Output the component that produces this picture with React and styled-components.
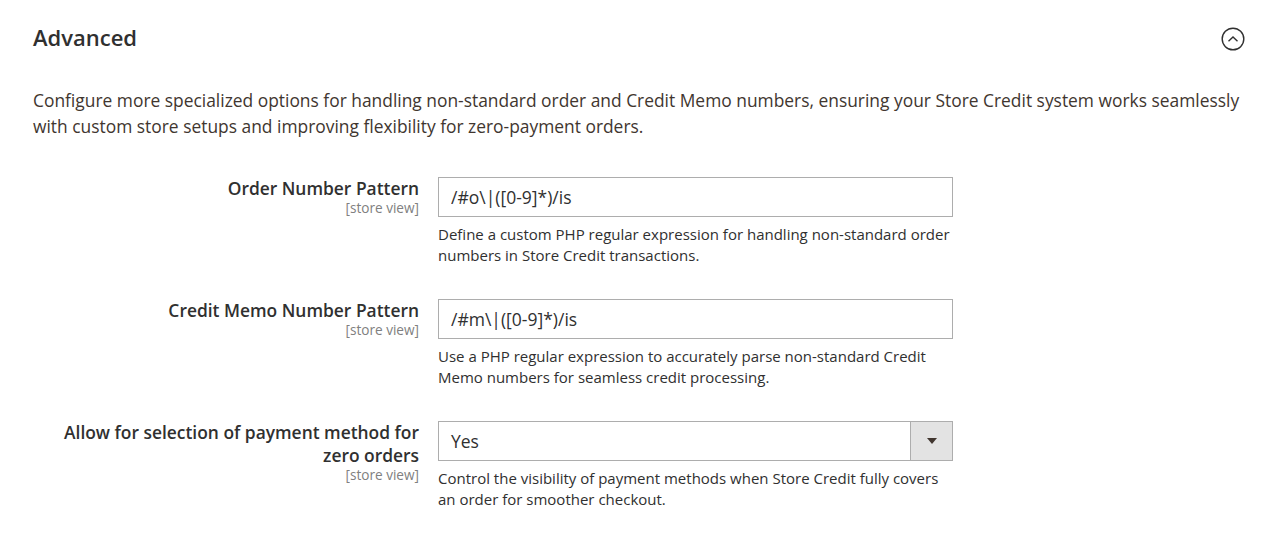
import React from 'react';
import styled, { createGlobalStyle } from 'styled-components';

const GlobalStyle = createGlobalStyle`
  body {
    margin: 0;
    background: #fff;
    font-family: 'Open Sans', 'Liberation Sans', sans-serif;
    color: #41362f;
  }
`;

const Section = styled.section`
  padding: 22px 20px 20px 33px;
`;

const Header = styled.div`
  display: flex;
  justify-content: space-between;
  align-items: center;
  height: 30px;
`;

const Title = styled.h2`
  margin: 0;
  font-size: 22px;
  font-weight: 600;
  color: #303030;
`;

const Toggle = styled.button`
  border: none;
  background: none;
  padding: 0;
  width: 24px;
  height: 24px;
  margin-right: 8px;
  margin-top: 3px;
  cursor: pointer;
  display: flex;
`;

const Intro = styled.p`
  margin: 35px 0 38px;
  font-size: 17.4px;
  line-height: 26px;
  color: #41362f;
`;

const Rows = styled.div`
  display: flex;
  flex-direction: column;
  gap: 33px;
`;

const Row = styled.div`
  display: grid;
  grid-template-columns: 386px 515px;
  column-gap: 19px;
`;

const LabelCol = styled.div`
  text-align: right;
`;

const Label = styled.div`
  font-size: 17.4px;
  font-weight: 600;
  line-height: 23px;
  color: #303030;
`;

const Scope = styled.div`
  font-size: 13.6px;
  line-height: 16px;
  color: #808080;
`;

const Input = styled.input`
  box-sizing: border-box;
  width: 100%;
  height: 40px;
  border: 1px solid #adadad;
  padding: 0 12px;
  font-family: inherit;
  font-size: 17.5px;
  color: #303030;
  outline: none;
  border-radius: 0;
`;

const SelectBox = styled.div`
  box-sizing: border-box;
  height: 40px;
  border: 1px solid #adadad;
  display: flex;
  align-items: stretch;
`;

const SelectValue = styled.div`
  flex: 1;
  display: flex;
  align-items: center;
  padding: 0 12px;
  font-size: 17.5px;
  color: #303030;
`;

const SelectArrow = styled.div`
  width: 41px;
  background: #e3e3e3;
  border-left: 1px solid #adadad;
  display: flex;
  align-items: center;
  justify-content: center;
  &::after {
    content: '';
    border-left: 5px solid transparent;
    border-right: 5px solid transparent;
    border-top: 6px solid #41362f;
  }
`;

const Note = styled.div`
  margin-top: 7px;
  font-size: 15px;
  line-height: 21px;
  color: #303030;
`;

const fields = [
  {
    label: 'Order Number Pattern',
    value: '/#o\\|([0-9]*)/is',
    note: 'Define a custom PHP regular expression for handling non-standard order numbers in Store Credit transactions.',
  },
  {
    label: 'Credit Memo Number Pattern',
    value: '/#m\\|([0-9]*)/is',
    note: 'Use a PHP regular expression to accurately parse non-standard Credit Memo numbers for seamless credit processing.',
  },
  {
    label: 'Allow for selection of payment method for zero orders',
    select: 'Yes',
    note: 'Control the visibility of payment methods when Store Credit fully covers an order for smoother checkout.',
  },
];

export default function App() {
  return (
    <>
      <GlobalStyle />
      <Section>
        <Header>
          <Title>Advanced</Title>
          <Toggle aria-label="Collapse">
            <svg width="24" height="24" viewBox="0 0 24 24" fill="none">
              <circle cx="12" cy="12" r="10.8" stroke="#303030" strokeWidth="1.4" />
              <path d="M7.5 14.2 L12 10 L16.5 14.2" stroke="#303030" strokeWidth="1.4" />
            </svg>
          </Toggle>
        </Header>
        <Intro>
          Configure more specialized options for handling non-standard order and Credit Memo numbers, ensuring your Store Credit system works seamlessly with custom store setups and improving flexibility for zero-payment orders.
        </Intro>
        <Rows>
          {fields.map((f) => (
            <Row key={f.label}>
              <LabelCol>
                <Label>{f.label}</Label>
                <Scope>[store view]</Scope>
              </LabelCol>
              <div>
                {f.select ? (
                  <SelectBox>
                    <SelectValue>{f.select}</SelectValue>
                    <SelectArrow />
                  </SelectBox>
                ) : (
                  <Input defaultValue={f.value} />
                )}
                <Note>{f.note}</Note>
              </div>
            </Row>
          ))}
        </Rows>
      </Section>
    </>
  );
}
